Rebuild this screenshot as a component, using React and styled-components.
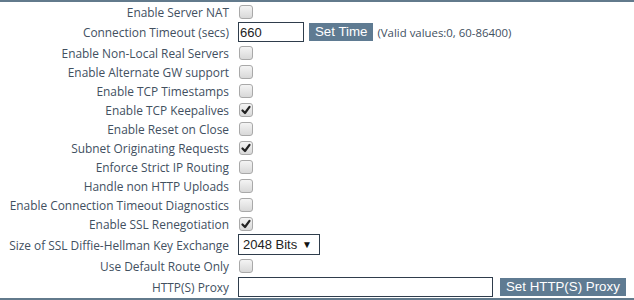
import React from "react";
import styled, { createGlobalStyle } from "styled-components";

const Global = createGlobalStyle`
  html, body { margin: 0; padding: 0; background: #fff; }
  body { font-family: "Open Sans", "Noto Sans", sans-serif; }
`;

const Panel = styled.div`
  width: 634px;
  box-sizing: border-box;
  border-top: 2px solid #627a8c;
  border-bottom: 2px solid #627a8c;
  display: flex;
  flex-direction: column;
`;

const Row = styled.div`
  display: grid;
  grid-template-columns: 229px 1fr;
  column-gap: 10px;
  align-items: center;
  height: ${(p) => p.$h || 19}px;
`;

const Label = styled.div`
  text-align: right;
  font-size: 11.9px;
  color: #42505f;
  white-space: nowrap;
`;

const Controls = styled.div`
  display: flex;
  align-items: center;
  gap: 5px;
`;

const Box = styled.span`
  width: 12px;
  height: 12px;
  border: 1px solid #a9a9a9;
  border-radius: 3px;
  background: linear-gradient(#f4f4f4, #d8d8d8);
  display: inline-flex;
  align-items: center;
  justify-content: center;
`;

const TextInput = styled.input`
  box-sizing: border-box;
  width: ${(p) => p.$w}px;
  height: 20px;
  margin-left: -1px;
  border: 1px solid #2f3d4c;
  padding: 0 1px;
  font-family: "Liberation Sans", Arial, sans-serif;
  font-size: 13px;
  color: #222;
  outline: none;
`;

const Button = styled.button`
  height: 18px;
  padding: 0 6px;
  border: none;
  background: #5f7b92;
  color: #fff;
  font-family: "Liberation Sans", Arial, sans-serif;
  font-size: 13.3px;
  line-height: 18px;
  margin-left: ${(p) => p.$ml || 0}px;
`;

const Hint = styled.span`
  font-size: 11.4px;
  color: #42505f;
  margin-left: -1px;
`;

const Select = styled.div`
  box-sizing: border-box;
  width: 82px;
  height: 21px;
  margin-left: -1px;
  border: 1px solid #2f3d4c;
  display: flex;
  align-items: center;
  justify-content: space-between;
  padding: 0 7px 0 4px;
  font-family: "Liberation Sans", Arial, sans-serif;
  font-size: 13px;
  color: #222;
`;

const Arrow = styled.span`
  font-size: 10px;
  color: #111;
`;

function Check({ on }) {
  return (
    <Box>
      {on && (
        <svg width="10" height="10" viewBox="0 0 10 10">
          <path d="M1.5 5.5 L4 8 L8.5 1.8" fill="none" stroke="#222" strokeWidth="2.2" strokeLinecap="round" strokeLinejoin="round" />
        </svg>
      )}
    </Box>
  );
}

const checks = [
  ["Enable Server NAT", false],
  "timeout",
  ["Enable Non-Local Real Servers", false],
  ["Enable Alternate GW support", false],
  ["Enable TCP Timestamps", false],
  ["Enable TCP Keepalives", true],
  ["Enable Reset on Close", false],
  ["Subnet Originating Requests", true],
  ["Enforce Strict IP Routing", false],
  ["Handle non HTTP Uploads", false],
  ["Enable Connection Timeout Diagnostics", false],
  ["Enable SSL Renegotiation", true],
  "dh",
  ["Use Default Route Only", false, 20],
  "proxy",
];

export default function App() {
  return (
    <>
      <Global />
      <Panel>
        {checks.map((c, i) => {
          if (c === "timeout")
            return (
              <Row key={i} $h={22}>
                <Label>Connection Timeout (secs)</Label>
                <Controls>
                  <TextInput $w={66} defaultValue="660" />
                  <Button>Set Time</Button>
                  <Hint>(Valid values:0, 60-86400)</Hint>
                </Controls>
              </Row>
            );
          if (c === "dh")
            return (
              <Row key={i} $h={23}>
                <Label>Size of SSL Diffie-Hellman Key Exchange</Label>
                <Controls>
                  <Select>
                    <span>2048 Bits</span>
                    <Arrow>▼</Arrow>
                  </Select>
                </Controls>
              </Row>
            );
          if (c === "proxy")
            return (
              <Row key={i} $h={22}>
                <Label>HTTP(S) Proxy</Label>
                <Controls>
                  <TextInput $w={255} defaultValue="" />
                  <Button $ml={2}>Set HTTP(S) Proxy</Button>
                </Controls>
              </Row>
            );
          return (
            <Row key={i} $h={c[2]}>
              <Label>{c[0]}</Label>
              <Controls>
                <Check on={c[1]} />
              </Controls>
            </Row>
          );
        })}
      </Panel>
    </>
  );
}
